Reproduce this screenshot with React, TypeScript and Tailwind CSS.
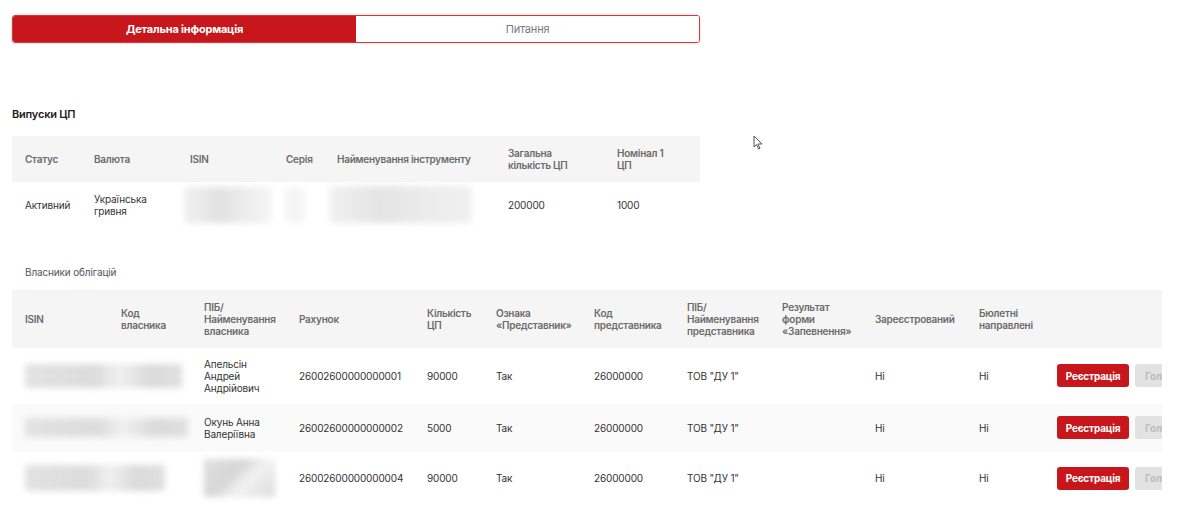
import React from 'react'

const RED = 'bg-[#c8161d]'

const issueCols = [69, 96, 96, 51, 171, 109, 96]
const ownerCols = [96, 83, 95, 128, 69, 98, 93, 95, 93, 104, 78, 120]

function Blur({ className }: { className: string }) {
  return <div className={`rounded-[2px] blur-[3px] ${className}`} />
}

function Cursor() {
  return (
    <svg className="absolute left-[753px] top-[135px]" width="11" height="15" viewBox="0 0 11 15">
      <path d="M1 1 L1 12 L3.5 9.5 L5.5 14 L7 13.3 L5 9 L9 9 Z" fill="#fff" stroke="#555" strokeWidth="1" strokeLinejoin="round" />
    </svg>
  )
}

function Tabs() {
  return (
    <div className="flex h-[28px] w-[688px] rounded-[3px] border border-[#d23a3f] overflow-hidden shadow-[0_0_2px_rgba(200,22,29,0.3)]">
      <div className={`${RED} flex w-[343px] items-center justify-center text-[11px] font-bold tracking-[-0.2px] text-white`}>
        Детальна інформація
      </div>
      <div className="flex flex-1 items-center justify-center bg-white text-[11px] tracking-[-0.2px] text-[#7a7a7a]">Питання</div>
    </div>
  )
}

function IssuesTable() {
  const heads = ['Статус', 'Валюта', 'ISIN', 'Серія', 'Найменування інструменту', 'Загальна кількість ЦП', 'Номінал 1 ЦП']
  return (
    <div className="w-[688px]">
      <div className="flex h-[46px] items-center bg-[#f5f5f5]">
        {heads.map((h, i) => (
          <div
            key={h}
            style={{ width: issueCols[i] }}
            className={`pl-[13px] pr-1 text-[10px] font-semibold leading-[12px] tracking-[-0.25px] text-[#6b6b6b] ${i >= 5 ? 'pr-[30px]' : ''}`}
          >
            {h}
          </div>
        ))}
      </div>
      <div className="flex h-[46px] items-center text-[10px] leading-[12px] tracking-[-0.15px] text-[#333]">
        <div style={{ width: issueCols[0] }} className="pl-[13px]">Активний</div>
        <div style={{ width: issueCols[1] }} className="pl-[13px] pr-4">Українська гривня</div>
        <div style={{ width: issueCols[2] }} className="flex h-full items-center py-[5px] pl-[7px]">
          <Blur className="h-[36px] w-[88px] bg-[linear-gradient(90deg,#f1f1f1,#e2e2e2_40%,#ececec_70%,#f6f6f6)]" />
        </div>
        <div style={{ width: issueCols[3] }} className="flex h-full items-center py-[5px] pl-[12px]">
          <Blur className="h-[34px] w-[20px] bg-[#f5f5f5]" />
        </div>
        <div style={{ width: issueCols[4] }} className="flex h-full items-center py-[5px] pl-[6px]">
          <Blur className="h-[37px] w-[142px] bg-[linear-gradient(90deg,#f0f0f0,#e4e4e4_35%,#ebebeb_65%,#f0f0f0)]" />
        </div>
        <div style={{ width: issueCols[5] }} className="pl-[13px]">200000</div>
        <div style={{ width: issueCols[6] }} className="pl-[13px]">1000</div>
      </div>
    </div>
  )
}

type Owner = {
  name: string | null
  account: string
  qty: string
  bg: string
  h: string
  isinBlur: string
}

const owners: Owner[] = [
  { name: 'Апельсін Андрей Андрійович', account: '26002600000000001', qty: '90000', bg: 'bg-white', h: 'h-[56px]', isinBlur: 'w-[157px] h-[24px]' },
  { name: 'Окунь Анна Валеріївна', account: '26002600000000002', qty: '5000', bg: 'bg-[#fafafa]', h: 'h-[48px]', isinBlur: 'w-[163px] h-[19px]' },
  { name: null, account: '26002600000000004', qty: '90000', bg: 'bg-white', h: 'h-[53px]', isinBlur: 'w-[140px] h-[26px]' },
]

function OwnersTable() {
  const heads = [
    'ISIN',
    'Код власника',
    'ПІБ/ Найменування власника',
    'Рахунок',
    'Кількість ЦП',
    'Ознака «Представник»',
    'Код представника',
    'ПІБ/ Найменування представника',
    'Результат форми «Запевнення»',
    'Зареєстрований',
    'Бюлетні направлені',
    '',
  ]
  return (
    <div className="w-[1150px] overflow-hidden">
      <div className="w-[1250px]">
        <div className="flex h-[58px] items-center bg-[#f5f5f5]">
          {heads.map((h, i) => (
            <div
              key={i}
              style={{ width: ownerCols[i] }}
              className="pl-[13px] pr-2 text-[10px] font-semibold leading-[12px] tracking-[-0.25px] text-[#6b6b6b]"
            >
              {h}
            </div>
          ))}
        </div>
        {owners.map((o) => (
          <div key={o.account} className={`flex items-center text-[10px] leading-[12px] tracking-[-0.15px] text-[#333] ${o.bg} ${o.h}`}>
            <div style={{ width: ownerCols[0] + ownerCols[1] }} className="pl-[13px]">
              <Blur className={`${o.isinBlur} bg-[linear-gradient(90deg,#e2e2e2,#dcdcdc_45%,#f0f0f0_60%,#dadada_80%,#e0e0e0)]`} />
            </div>
            <div style={{ width: ownerCols[2] }} className="pl-[13px] pr-2">
              {o.name ?? <Blur className="h-[38px] w-[71px] bg-[linear-gradient(135deg,#e0e0e0,#d6d6d6_40%,#f2f2f2_60%,#dcdcdc)]" />}
            </div>
            <div style={{ width: ownerCols[3] }} className="pl-[13px]">{o.account}</div>
            <div style={{ width: ownerCols[4] }} className="pl-[13px]">{o.qty}</div>
            <div style={{ width: ownerCols[5] }} className="pl-[13px]">Так</div>
            <div style={{ width: ownerCols[6] }} className="pl-[13px]">26000000</div>
            <div style={{ width: ownerCols[7] }} className="pl-[13px]">ТОВ "ДУ 1"</div>
            <div style={{ width: ownerCols[8] }} className="pl-[13px]" />
            <div style={{ width: ownerCols[9] }} className="pl-[13px]">Ні</div>
            <div style={{ width: ownerCols[10] }} className="pl-[13px]">Ні</div>
            <div className="flex gap-[6px] pl-[13px]">
              <button className={`${RED} h-[23px] w-[72px] rounded-[3px] text-[10px] font-bold tracking-[-0.2px] text-white`}>Реєстрація</button>
              <button className="h-[23px] w-[80px] rounded-[3px] bg-[#e2e2e2] pl-[10px] text-left text-[10px] font-bold text-[#bdbdbd]">Голосування</button>
            </div>
          </div>
        ))}
      </div>
    </div>
  )
}

export default function App() {
  return (
    <div className="relative h-[513px] w-[1180px] overflow-hidden bg-white font-['Inter','Noto_Sans',sans-serif]">
      <div className="flex flex-col pl-[12px] pt-[15px]">
        <Tabs />
        <div className="mt-[63px] text-[11px] font-semibold tracking-[-0.2px] text-[#222]">Випуски ЦП</div>
        <div className="mt-[13px]">
          <IssuesTable />
        </div>
        <div className="mt-[37px] pl-[13px] text-[10px] tracking-[-0.15px] text-[#555]">Власники облігацій</div>
        <div className="mt-[10px]">
          <OwnersTable />
        </div>
      </div>
      <Cursor />
    </div>
  )
}
